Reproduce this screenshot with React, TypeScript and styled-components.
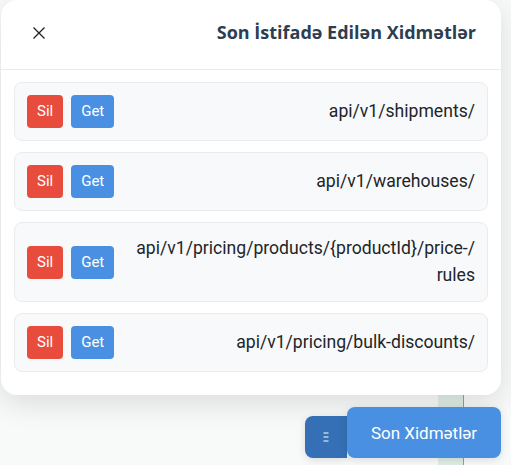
import React from "react";
import styled, { createGlobalStyle } from "styled-components";

const Global = createGlobalStyle`
  html, body { margin: 0; padding: 0; }
  body {
    font-family: Roboto, "Open Sans", Arial, sans-serif;
    background-color: #f8faf9;
    background-image: linear-gradient(to right, transparent 438px, #dfede5 438px, #dfede5 463px, #63bb8c 463px, #63bb8c 464px, transparent 464px);
    width: 511px;
    height: 465px;
    overflow: hidden;
  }
`;

const Page = styled.div`
  display: flex;
  flex-direction: column;
  width: 511px;
  height: 465px;
`;

const Panel = styled.section`
  width: 500px;
  margin-left: 1px;
  background: #ffffff;
  border-radius: 16px;
  box-shadow: 0 8px 30px rgba(0, 0, 0, 0.12);
  display: flex;
  flex-direction: column;
`;

const Header = styled.header`
  height: 69px;
  border-bottom: 1px solid #e9ecef;
  display: flex;
  align-items: center;
  justify-content: space-between;
  padding: 0 25px 0 26px;
`;

const CloseButton = styled.button`
  border: none;
  background: none;
  padding: 6px;
  margin-top: -4px;
  display: flex;
  cursor: pointer;
`;

const Title = styled.h2`
  margin: 0 0 6px;
  font-family: "Open Sans", Arial, sans-serif;
  font-size: 18px;
  font-weight: 700;
  color: #2c3e50;
`;

const List = styled.div`
  display: flex;
  flex-direction: column;
  padding: 12px 13px;
`;

const Card = styled.div`
  display: flex;
  align-items: center;
  gap: 12px;
  padding: 12px;
  margin-bottom: 11px;
  background: #f8f9fa;
  border: 1px solid #e9ecef;
  border-radius: 8px;
`;

const Actions = styled.div`
  display: flex;
  gap: 8px;
  flex-shrink: 0;
`;

const ActionButton = styled.button<{ $variant: "danger" | "primary" }>`
  border: none;
  border-radius: 4px;
  padding: 8px 10px;
  font-family: Roboto, Arial, sans-serif;
  font-size: 15px;
  line-height: 17px;
  color: #ffffff;
  background: ${(p) => (p.$variant === "danger" ? "#e74c3c" : "#4a90e2")};
  cursor: pointer;
`;

const Path = styled.div`
  flex: 1;
  text-align: right;
  font-family: Roboto, Arial, sans-serif;
  font-size: 17.6px;
  line-height: 27px;
  color: #212529;
  overflow-wrap: anywhere;
`;

const FloatBar = styled.div`
  display: flex;
  justify-content: flex-end;
  align-items: flex-end;
  margin-top: 12px;
  padding-right: 10px;
`;

const MenuTab = styled.button`
  width: 42px;
  height: 42px;
  border: none;
  border-radius: 8px 0 0 8px;
  background: #3570b6;
  display: flex;
  align-items: center;
  justify-content: center;
  box-shadow: 0 2px 8px rgba(0, 0, 0, 0.12);
  padding: 0;
`;

const MainButton = styled.button`
  height: 51px;
  padding: 0 24px;
  border: none;
  border-radius: 8px;
  background: #4a90e2;
  color: #ffffff;
  font-family: Roboto, Arial, sans-serif;
  font-size: 17px;
  box-shadow: 0 2px 8px rgba(0, 0, 0, 0.12);
`;

const items: { path: React.ReactNode }[] = [
  { path: "api/v1/shipments/" },
  { path: "api/v1/warehouses/" },
  {
    path: (
      <>
        api/v1/pricing/products/{"{productId}"}/price-/<wbr />rules
      </>
    ),
  },
  { path: "api/v1/pricing/bulk-discounts/" },
];

export default function App() {
  return (
    <>
      <Global />
      <Page>
        <Panel>
          <Header>
            <CloseButton aria-label="close">
              <svg width="12" height="12" viewBox="0 0 12 12">
                <path d="M0.5 0.5 L11.5 11.5 M11.5 0.5 L0.5 11.5" stroke="#222" strokeWidth="1.3" />
              </svg>
            </CloseButton>
            <Title>Son İstifadə Edilən Xidmətlər</Title>
          </Header>
          <List>
            {items.map((it, i) => (
              <Card key={i}>
                <Actions>
                  <ActionButton $variant="danger">Sil</ActionButton>
                  <ActionButton $variant="primary">Get</ActionButton>
                </Actions>
                <Path>{it.path}</Path>
              </Card>
            ))}
          </List>
        </Panel>
        <FloatBar>
          <MenuTab aria-label="menu">
            <svg width="6" height="10" viewBox="0 0 6 10">
              <path d="M0.5 1 H5.5 M0.5 5 H5.5 M0.5 9 H5.5" stroke="#fff" strokeWidth="1.2" />
            </svg>
          </MenuTab>
          <MainButton>Son Xidmətlər</MainButton>
        </FloatBar>
      </Page>
    </>
  );
}
